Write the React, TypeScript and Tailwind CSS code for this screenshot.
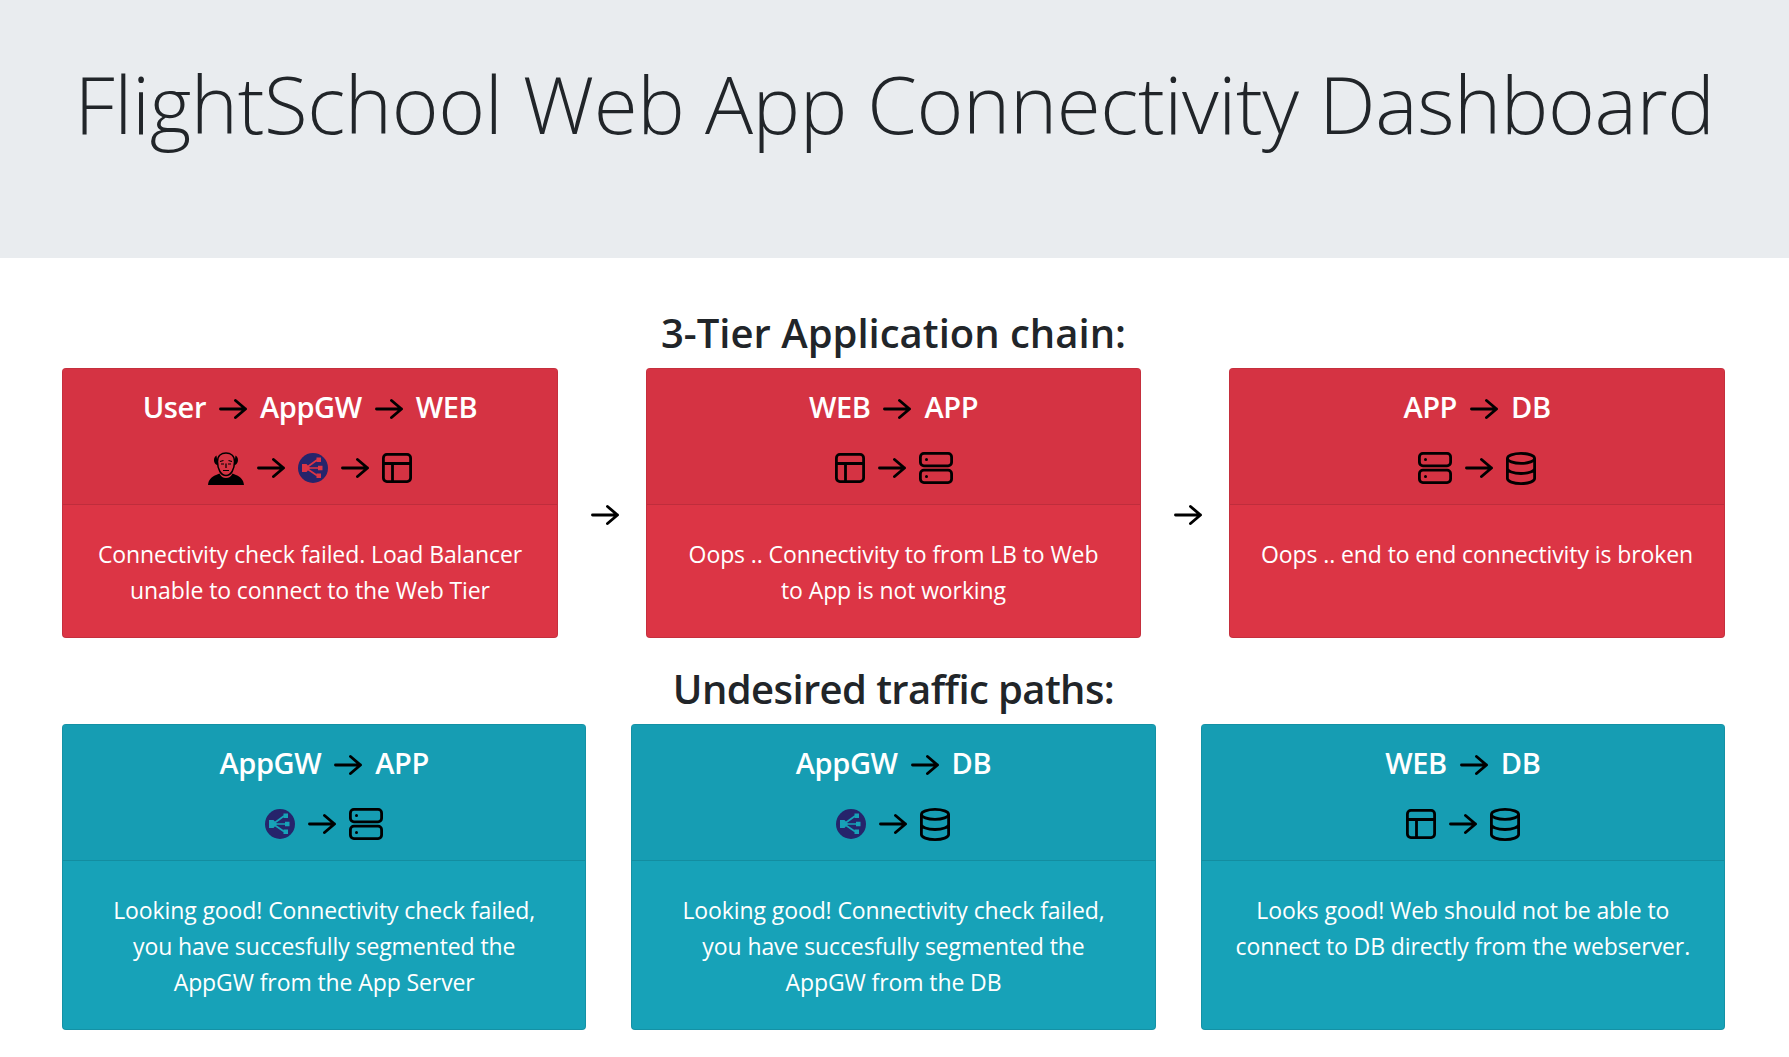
const font = "font-['Open_Sans','Noto_Sans',sans-serif]";

function Arrow() {
  return (
    <svg width="28" height="28" viewBox="0 0 28 28" fill="none" stroke="#000" strokeWidth="2.900" strokeLinecap="round" strokeLinejoin="round" className="inline-block shrink-0">
      <path d="M1.500 14h25M16.500 5.500l10 8.500-10 8.500" />
    </svg>
  );
}

function UserIcon() {
  return (
    <svg width="36" height="33" viewBox="0 0 36 33" className="shrink-0">
      <path d="M0 33c.5-5 3-8 8-10l3.500-1.500c1.500 3 3.500 4.500 6.500 4.500s5-1.500 6.500-4.500L28 23c5 2 7.500 5 8 10z" fill="#000" />
      <path d="M8.500 3.500c-3 1.500-3.500 6.500-.5 9l2 1zM27.500 3.500c3 1.500 3.500 6.500.5 9l-2 1z" fill="#000" />
      <path d="M9.500 9.500c0-6 4-8.500 8.500-8.500s8.500 2.500 8.500 8.500c0 8-3.500 14-8.500 14s-8.500-6-8.500-14z" fill="none" stroke="#000" strokeWidth="1.500" />
      <path d="M12 9.500l3.500-1M24 9.500l-3.500-1M13 12h3M20 12h3M18 11.500v4.500M15 18.500h6" stroke="#000" strokeWidth="1.200" fill="none" />
    </svg>
  );
}

function GwIcon({ c }: { c: string }) {
  return (
    <svg width="30" height="30" viewBox="0 0 30 30" className="shrink-0">
      <circle cx="15" cy="15" r="15" fill="#26246b" />
      <path d="M8 15l11-8M8 15h12M8 15l11 7.500" stroke={c} strokeWidth="1.700" fill="none" />
      <path d="M4 11h4.500l3.500 4-3.500 4H4zM18.500 4.500h4.500v4.500h-4.500zM20 12.800h4.500v4.500H20zM18.500 20.500h4.500V25h-4.500z" fill={c} />
    </svg>
  );
}

function TileIcon() {
  return (
    <svg width="30" height="30" viewBox="0 0 30 30" fill="none" stroke="#000" strokeWidth="2.800" className="shrink-0">
      <rect x="1.400" y="1.400" width="27.200" height="27.200" rx="3.500" />
      <path d="M1.400 10.500h27.200M10.500 10.500v18.100" />
    </svg>
  );
}

function ServerIcon() {
  return (
    <svg width="34" height="32" viewBox="0 0 34 32" fill="none" stroke="#000" strokeWidth="2.800" className="shrink-0">
      <rect x="1.400" y="1.400" width="31.200" height="12.400" rx="3.500" />
      <rect x="1.400" y="18.200" width="31.200" height="12.400" rx="3.500" />
      <circle cx="7.500" cy="7.600" r="1.500" fill="#000" stroke="none" />
      <circle cx="7.500" cy="24.400" r="1.500" fill="#000" stroke="none" />
    </svg>
  );
}

function DbIcon() {
  return (
    <svg width="30" height="33" viewBox="0 0 30 33" fill="none" stroke="#000" strokeWidth="2.800" className="shrink-0">
      <ellipse cx="15" cy="6.400" rx="13.600" ry="5" />
      <path d="M1.400 6.400v20.200c0 2.800 6 5 13.600 5s13.600-2.200 13.600-5V6.400M1.400 16.500c0 2.800 6 5 13.600 5s13.600-2.200 13.600-5" />
    </svg>
  );
}

function Card({ title, icons, lines, color, head, cls }: { title: string[]; icons: React.ReactNode[]; lines: string[]; color: string; head: string; cls: string }) {
  return (
    <div className={`${cls} ${color} rounded-[4px] border border-black/10 text-white flex flex-col`}>
      <div className={`${head} h-[136px] border-b border-black/10 flex flex-col items-center pt-[20px]`}>
        <div className="flex items-center justify-center text-[29px] leading-[36px] font-semibold tracking-[-0.4px]">
          {title.map((t, i) => (
            <span key={t} className="inline-flex items-center">
              {i > 0 && <span className="mx-[13px] inline-flex translate-y-[2px]"><Arrow /></span>}
              {t}
            </span>
          ))}
        </div>
        <div className="flex items-center justify-center gap-[13px] mt-[27px] h-[32px]">
          {icons.map((ic, i) => (
            <span key={i} className="inline-flex items-center gap-[13px]">
              {i > 0 && <Arrow />}
              {ic}
            </span>
          ))}
        </div>
      </div>
      <div className="flex-1 pt-[31px] px-[20px] text-center text-[23px] leading-[36px] tracking-[-0.1px]">
        {lines.map((l) => <div key={l}>{l}</div>)}
      </div>
    </div>
  );
}

const U = <UserIcon />, T = <TileIcon />, S = <ServerIcon />, D = <DbIcon />;
const GR = <GwIcon c="#dc3545" />, GB = <GwIcon c="#17a2b8" />;

export default function App() {
  return (
    <div className={`${font} min-h-[1057px] bg-white text-[#212529]`}>
      <header className="h-[258px] bg-[#e9ecef] pt-[53px] text-center">
        <h1 className="text-[80px] leading-[100px] font-light tracking-[-0.4px] whitespace-nowrap">FlightSchool Web App Connectivity Dashboard</h1>
      </header>
      <main className="pl-[62px] pr-[64px] pt-[45px]">
        <h2 className="text-center text-[40px] leading-[60px] font-semibold tracking-[0px] h-[65px]">3-Tier Application chain:</h2>
        <div className="flex items-center h-[270px]">
          <Card cls="w-[496px] h-full" color="bg-[#dc3545]" head="bg-[#d53343]" title={["User", "AppGW", "WEB"]} icons={[U, GR, T]} lines={["Connectivity check failed. Load Balancer", "unable to connect to the Web Tier"]} />
          <div className="w-[88px] flex justify-center pt-[23px] pl-[6px]"><Arrow /></div>
          <Card cls="w-[495px] h-full" color="bg-[#dc3545]" head="bg-[#d53343]" title={["WEB", "APP"]} icons={[T, S]} lines={["Oops .. Connectivity to from LB to Web", "to App is not working"]} />
          <div className="w-[88px] flex justify-center pt-[23px] pl-[6px]"><Arrow /></div>
          <Card cls="w-[496px] h-full" color="bg-[#dc3545]" head="bg-[#d53343]" title={["APP", "DB"]} icons={[S, D]} lines={["Oops .. end to end connectivity is broken"]} />
        </div>
        <h2 className="text-center text-[40px] leading-[60px] font-semibold tracking-[-0.6px] h-[86px] pt-[21px]">Undesired traffic paths:</h2>
        <div className="flex gap-[45px] h-[306px]">
          <Card cls="flex-1 h-full" color="bg-[#17a2b8]" head="bg-[#169db3]" title={["AppGW", "APP"]} icons={[GB, S]} lines={["Looking good! Connectivity check failed,", "you have succesfully segmented the", "AppGW from the App Server"]} />
          <Card cls="flex-1 h-full" color="bg-[#17a2b8]" head="bg-[#169db3]" title={["AppGW", "DB"]} icons={[GB, D]} lines={["Looking good! Connectivity check failed,", "you have succesfully segmented the", "AppGW from the DB"]} />
          <Card cls="flex-1 h-full" color="bg-[#17a2b8]" head="bg-[#169db3]" title={["WEB", "DB"]} icons={[T, D]} lines={["Looks good! Web should not be able to", "connect to DB directly from the webserver."]} />
        </div>
      </main>
    </div>
  );
}
